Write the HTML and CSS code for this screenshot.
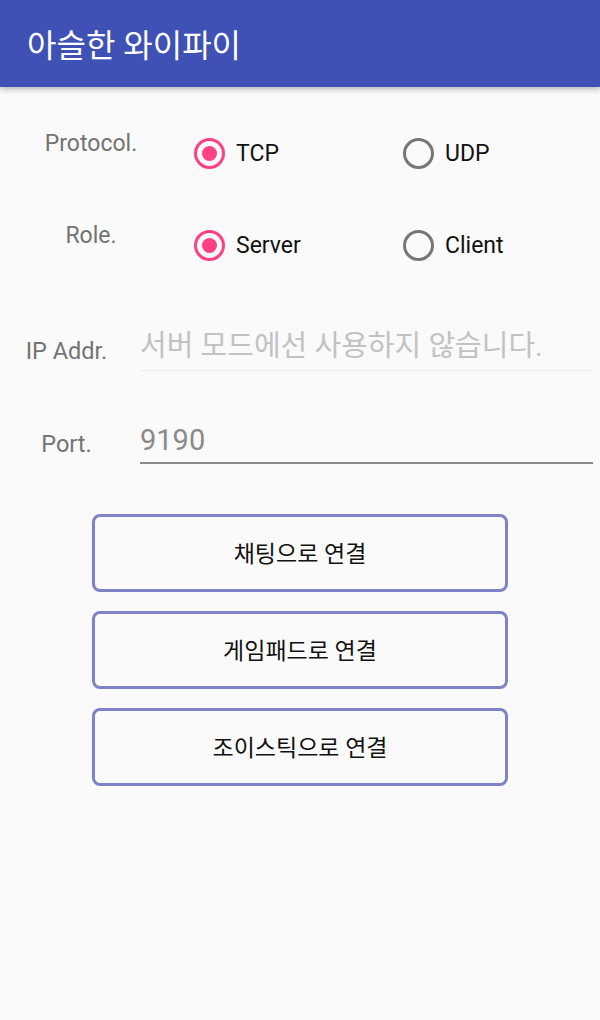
FILE: index.html
```html
<!DOCTYPE html>
<html lang="ko">
<head>
    <meta charset="UTF-8">
    <meta name="viewport" content="width=device-width, initial-scale=1.0">
    <title>아슬한 와이파이</title>
    <link rel="stylesheet" href="styles.css">
</head>
<body>
    <div class="app-bar">
        <h1 class="app-title">아슬한 와이파이</h1>
    </div>

    <div class="content">
        <div class="choice-row">
            <div class="choice-label">Protocol.</div>
            <div class="radio-group">
                <label class="radio checked"><span class="radio-mark"></span>TCP</label>
                <label class="radio"><span class="radio-mark"></span>UDP</label>
            </div>
        </div>

        <div class="choice-row">
            <div class="choice-label">Role.</div>
            <div class="radio-group">
                <label class="radio checked"><span class="radio-mark"></span>Server</label>
                <label class="radio"><span class="radio-mark"></span>Client</label>
            </div>
        </div>

        <div class="field-row first-field">
            <div class="field-label">IP Addr.</div>
            <div class="field disabled">
                <span class="field-hint">서버 모드에선 사용하지 않습니다.</span>
            </div>
        </div>

        <div class="field-row">
            <div class="field-label">Port.</div>
            <div class="field">
                <span class="field-value">9190</span>
            </div>
        </div>

        <div class="buttons">
            <button class="connect-button">채팅으로 연결</button>
            <button class="connect-button">게임패드로 연결</button>
            <button class="connect-button">조이스틱으로 연결</button>
        </div>
    </div>
</body>
</html>
```

FILE: styles.css
```css
body {
    margin: 0;
    padding: 0;
    background-color: #fafafa;
    font-family: Roboto, "Noto Sans CJK KR", sans-serif;
    width: 600px;
    height: 1020px;
    overflow: hidden;
}

.app-bar {
    height: 87px;
    background-color: #3f51b5;
    display: flex;
    align-items: center;
    padding-left: 27px;
    box-shadow: 0 2px 6px rgba(0, 0, 0, 0.28);
    position: relative;
}

.app-title {
    margin: 0;
    color: #ffffff;
    font-size: 32px;
    font-weight: 400;
    padding-bottom: 2px;
}

.content {
    padding-top: 44px;
}

.choice-row {
    display: flex;
    height: 92px;
}

.choice-label {
    width: 182px;
    text-align: center;
    color: #737373;
    font-size: 23px;
    line-height: 26px;
}

.radio-group {
    flex: 1;
    display: flex;
    padding-top: 6px;
}

.radio {
    flex: 1;
    display: flex;
    align-items: center;
    height: 32px;
    padding-left: 12px;
    font-size: 23px;
    color: #111111;
}

.radio-mark {
    width: 25px;
    height: 25px;
    border: 3.5px solid #767676;
    border-radius: 50%;
    margin-right: 11px;
    display: flex;
    align-items: center;
    justify-content: center;
}

.radio.checked .radio-mark {
    border-color: #ff4081;
}

.radio.checked .radio-mark::after {
    content: "";
    width: 15px;
    height: 15px;
    border-radius: 50%;
    background: #ff4081;
}

.field-row {
    display: flex;
    height: 93px;
}

.first-field {
    margin-top: 8px;
}

.field-label {
    width: 133px;
    text-align: center;
    color: #737373;
    font-size: 23.5px;
    line-height: 26px;
    padding-top: 15px;
}

.field {
    flex: 1;
    margin-left: 7px;
    margin-right: 7px;
    height: 48px;
    border-bottom: 2px solid #8a8a8a;
    display: flex;
    align-items: flex-start;
    box-sizing: border-box;
}

.field.disabled {
    border-bottom: 1px solid #ececec;
}

.field-hint {
    color: #c2c2c2;
    font-size: 29px;
    line-height: 34px;
    margin-top: 6px;
    white-space: nowrap;
}

.field-value {
    color: #8a8a8a;
    font-size: 29px;
    line-height: 34px;
    margin-top: 7px;
}

.buttons {
    display: flex;
    flex-direction: column;
    align-items: center;
    gap: 19px;
    margin-top: 5px;
}

.connect-button {
    width: 416px;
    height: 78px;
    border: 3px solid #7e82c6;
    border-radius: 8px;
    background: transparent;
    font-family: Roboto, "Noto Sans CJK KR", sans-serif;
    font-size: 23px;
    color: #111111;
    padding: 0 0 2px;
}
```
